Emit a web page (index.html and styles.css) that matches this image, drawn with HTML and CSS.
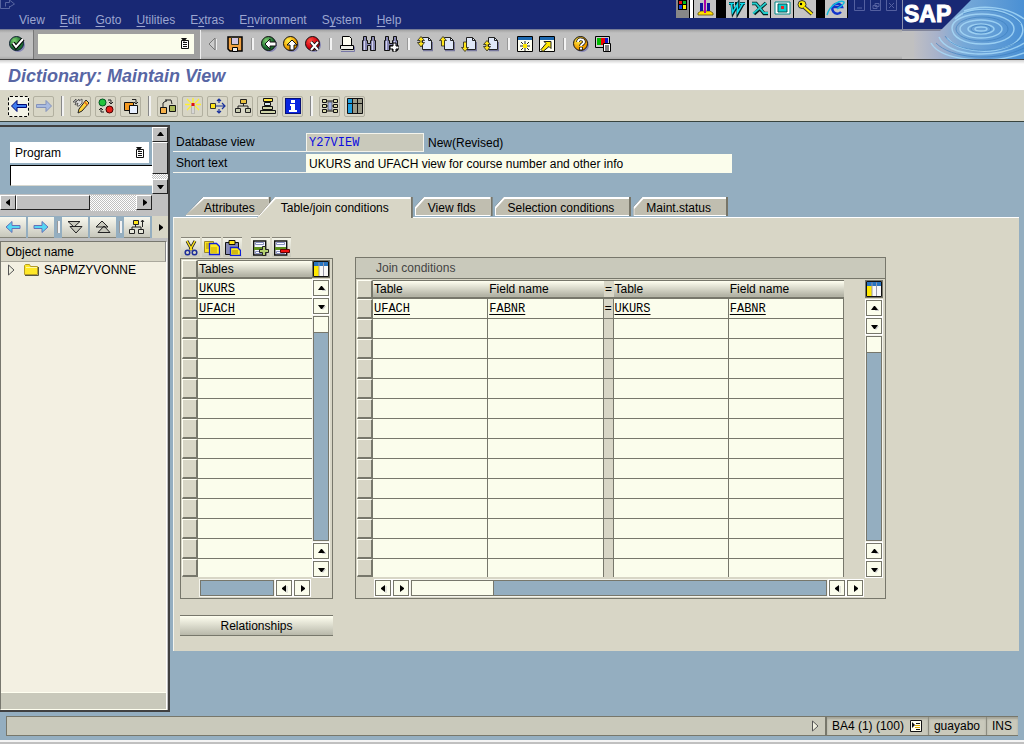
FILE: index.html
```
<!DOCTYPE html>
<html lang="en">
<head>
<meta charset="utf-8">
<title>Dictionary: Maintain View</title>
<link rel="stylesheet" href="styles.css">
</head>
<body>
<svg class="defs" aria-hidden="true">
  <defs>
    <linearGradient id="fade" x1="0" x2="1" y1="0" y2="0"><stop offset="0" stop-color="#bfbfc3"/><stop offset=".22" stop-color="#a6b1cb"/><stop offset=".45" stop-color="#77a9d8"/><stop offset="1" stop-color="#4a90d4"/></linearGradient>
    <radialGradient id="green" cx=".35" cy=".3"><stop offset="0" stop-color="#7fd070"/><stop offset="1" stop-color="#1c6c30"/></radialGradient>
    <radialGradient id="gold" cx=".35" cy=".3"><stop offset="0" stop-color="#fff04a"/><stop offset="1" stop-color="#f0a000"/></radialGradient>
    <radialGradient id="red" cx=".35" cy=".3"><stop offset="0" stop-color="#ff5040"/><stop offset="1" stop-color="#d00010"/></radialGradient>
  </defs>
  <symbol id="i-ok" viewBox="0 0 16 16"><circle cx="9" cy="9" r="7" fill="#8585b5"/><circle cx="7.500" cy="7.500" r="7" fill="url(#green)" stroke="#123"/><path d="M4 7l3 4 7-8" fill="none" stroke="#000" stroke-width="4"/><path d="M4 7l3 4 7-8" fill="none" stroke="#fff" stroke-width="2"/></symbol>
  <symbol id="i-back" viewBox="0 0 16 16"><circle cx="9" cy="9" r="7" fill="#8585b5"/><circle cx="7.500" cy="7.500" r="7" fill="url(#green)" stroke="#111"/><path d="M4 8l5-5v3h6v4H9v3z" fill="#fff" stroke="#111"/></symbol>
  <symbol id="i-exit" viewBox="0 0 16 16"><circle cx="9" cy="9" r="7" fill="#8585b5"/><circle cx="7.500" cy="7.500" r="7" fill="url(#gold)" stroke="#111"/><path d="M9 4l5 5h-3v5H7V9H4z" fill="#fff" stroke="#111"/></symbol>
  <symbol id="i-cancel" viewBox="0 0 16 16"><circle cx="9" cy="9" r="7" fill="#8585b5"/><circle cx="7.500" cy="7.500" r="7" fill="url(#red)" stroke="#111"/><path d="M6 6l7 8M13 6l-7 8" stroke="#111" stroke-width="3.500"/><path d="M6 6l7 8M13 6l-7 8" stroke="#fff" stroke-width="2"/></symbol>
  <symbol id="i-tri" viewBox="0 0 16 16"><path d="M10 2v12L4 8z" fill="#ccc" stroke="#777"/><path d="M11.500 3v11" stroke="#eee"/></symbol>
  <symbol id="i-save" viewBox="0 0 16 16"><path d="M1 1h14v14H3l-2-2z" fill="#f0a040" stroke="#000" stroke-width="1.500"/><path d="M4.500 1.500h7v7h-7z" fill="#d0c4e0" stroke="#332"/><path d="M5.500 11.500h5v4h-5z" fill="#eee" stroke="#000"/></symbol>
  <symbol id="i-print" viewBox="0 0 16 16"><path d="M2 15.500h13.500v-5" stroke="#7777a8" fill="none"/><path d="M3.500.5h7l2 2v7h-9z" fill="#fffef2" stroke="#000"/><path d="M1.500 9.500h13v4h-12l-1-1z" fill="#f0f0e8" stroke="#000"/></symbol>
  <symbol id="i-find" viewBox="0 0 16 16"><path d="M2.500.5h3v4h1v3h3v-3h1v-4h3v4h1v10h-5v-5h-3v5h-5v-10h1z" fill="#8888b4" stroke="#111"/><path d="M3.500 5v9M11.500 5v9" stroke="#d4d4ee"/></symbol>
  <symbol id="i-findnext" viewBox="0 0 16 16"><use href="#i-find"/><path d="M10 7h3v3h3v3h-3v3h-3v-3H7v-3h3z" fill="#fff" stroke="#000"/></symbol>
  <symbol id="i-page" viewBox="0 0 16 16"><path d="M6 14.500h9.500V6" fill="none" stroke="#77779c" stroke-width="1.500"/><path d="M5.500 1.500h6l3 3v9h-9z" fill="#e0e8f8" stroke="#222"/><path d="M11.500 1.500v3h3" fill="none" stroke="#222"/></symbol>
  <symbol id="i-first" viewBox="0 0 16 16"><use href="#i-page"/><path d="M4 .5l3.500 4H5v2h2.500L4 11 .5 6.500H3v-2H.5z" fill="#ffe51a" stroke="#222" stroke-width=".8"/></symbol>
  <symbol id="i-prev" viewBox="0 0 16 16"><use href="#i-page"/><path d="M4 .5l3.500 4h-2V10h-3V4.500h-2z" fill="#ffe51a" stroke="#222" stroke-width=".8"/></symbol>
  <symbol id="i-next" viewBox="0 0 16 16"><use href="#i-page"/><path d="M4 15.500l3.500-4h-2V6h-3v5.500h-2z" fill="#ffe51a" stroke="#222" stroke-width=".8"/></symbol>
  <symbol id="i-last" viewBox="0 0 16 16"><use href="#i-page"/><path d="M4 4.500l3.500 4H5v2h2.500L4 15 .5 10.500H3v-2H.5z" fill="#ffe51a" stroke="#222" stroke-width=".8"/></symbol>
  <symbol id="i-new" viewBox="0 0 16 16"><path d="M.5.500h15v15H.5z" fill="#fffff0" stroke="#000"/><path d="M1 1h14v3H1z" fill="#1c68b0"/><path d="M8 5v10M3 10h10M4 6l8 8M12 6l-8 8" stroke="#222"/><path d="M6 8h4v4H6z" fill="#ffe800"/></symbol>
  <symbol id="i-short" viewBox="0 0 16 16"><path d="M.5.500h15v15H.5z" fill="#fffff0" stroke="#000"/><path d="M1 1h14v3H1z" fill="#1c68b0"/><path d="M5 5.500h7v7l-2-2-6 5-2-2 5-6z" fill="#ffe800" stroke="#222"/></symbol>
  <symbol id="i-help" viewBox="0 0 16 16"><circle cx="9" cy="9" r="7" fill="#8585b5"/><circle cx="7.500" cy="7.500" r="7" fill="url(#gold)" stroke="#111"/><path d="M5 6c0-4 6-3 6 0 0 2-3 2-3 4M8 11v3" fill="none" stroke="#111" stroke-width="3.500"/><path d="M5 6c0-4 6-3 6 0 0 2-3 2-3 4M8 11.500v2" fill="none" stroke="#fff" stroke-width="2"/></symbol>
  <symbol id="i-layout" viewBox="0 0 16 16"><path d="M.5.500h14v11H.5z" fill="#ccc" stroke="#000"/><path d="M2 2h4v7H2z" fill="#0b0"/><path d="M6 2h4v7H6z" fill="#e00"/><path d="M10 2h3v7h-3z" fill="#11c"/><path d="M8.500 7.500h7v8h-7z" fill="#fff" stroke="#000"/><path d="M10 10h4M10 12h4M10 14h4" stroke="#000"/></symbol>
  <symbol id="i-doc" viewBox="0 0 10 12"><path d="M1.500 2.500h7v8h-7z" fill="#fff" stroke="#111"/><path d="M1 0h6L4 4z" fill="#111"/><path d="M3 4.500h4M3 6.500h4M3 8.500h4" stroke="#111" stroke-width="1"/></symbol>

  <symbol id="i-left" viewBox="0 0 16 16"><path d="M.5 8L6 2.500v4h9.500v3H6v4z" fill="#3d7cf0" stroke="#000872"/></symbol>
  <symbol id="i-rightdim" viewBox="0 0 16 16"><path d="M15.500 8L10 2.500v4H.5v3H10v4z" fill="#a9bbe0" stroke="#8392bb"/></symbol>
  <symbol id="i-edit" viewBox="0 0 16 16"><path d="M0 4l3-3v3l3-3v2l3-2v4L6 8H4l1-3-3 2 1-3z" fill="#ddd" stroke="#444" stroke-width=".8"/><path d="M13 2l3 3-7 8-4 2 1-4z" fill="#ffd238" stroke="#222"/><path d="M11.500 4l3 3" stroke="#e06820" stroke-width="1.500"/></symbol>
  <symbol id="i-swap" viewBox="0 0 16 16"><circle cx="4.500" cy="4.500" r="3.500" fill="#22c43c" stroke="#052"/><circle cx="11.500" cy="11.500" r="3.500" fill="#e82018" stroke="#400"/><path d="M10 2h3v4M11 4l2 2 2-2M6 14H3v-4M1 12l2-2 2 2" fill="none" stroke="#222"/></symbol>
  <symbol id="i-copyobj" viewBox="0 0 16 16"><path d="M1.500 4.500h9v8h-9z" fill="#f59a20" stroke="#111"/><path d="M6.500 7.500h8v8h-8z" fill="#e8f0ff" stroke="#111"/><path d="M9 1.500h4V6M11 4l2 2 2-2" fill="none" stroke="#222"/></symbol>
  <symbol id="i-hier" viewBox="0 0 16 16"><path d="M.5 9.500h6v6h-6z" fill="#f5b04a" stroke="#111"/><path d="M9.500 7.500h6v6h-6z" fill="#a8b858" stroke="#111"/><path d="M3 9V5l4-3h4l1 4M6 1v3" fill="none" stroke="#222"/></symbol>
  <symbol id="i-wand" viewBox="0 0 16 16"><path d="M8 0v5M2 1l4 4M14 1l-4 4M2 12l4-4M14 12l-4-4M0 6.500h5M16 6.500h-5" stroke="#fff02c" stroke-width="1.300"/><path d="M7 7h2v9H7z" fill="#fff" stroke="#777" stroke-width=".6"/><path d="M6.500 5h3v3h-3z" fill="#e01010"/></symbol>
  <symbol id="i-move" viewBox="0 0 16 16"><path d="M.5 5.500h5v5h-5z" fill="#ffe51a" stroke="#333"/><path d="M6 8h9M9 5V1M9 11v4M12 5l3 3-3 3M7 3l2-2 2 2M7 13l2 2 2-2" fill="none" stroke="#18309c" stroke-width="1.200"/></symbol>
  <symbol id="i-org" viewBox="0 0 16 16"><path d="M8.500 6v2M3 10V8h10v2" fill="none" stroke="#222"/><path d="M5.500 1.500h6v4h-6z" fill="#e8c040" stroke="#222"/><path d="M.5 10.500h5v4h-5zM10.500 10.500h5v4h-5z" fill="#c8ccb0" stroke="#222"/></symbol>
  <symbol id="i-stack" viewBox="0 0 16 16"><path d="M3.500.5h9v3h-9z" fill="#ffe640" stroke="#111"/><path d="M4.500 4.500h6v3h-6z" fill="#d8e8f0" stroke="#111"/><path d="M2.500 8.500h10v3h-10zM.5 12.500h15v3H.5z" fill="#d0d4a8" stroke="#111"/></symbol>
  <symbol id="i-info" viewBox="0 0 16 16"><path d="M0 0h16v16H0z" fill="#061078"/><path d="M1 1h14v14H1z" fill="#0824e0"/><path d="M6 2h4v3H6zM5 6h5v6h2v2H4v-2h2V8H5z" fill="#fff"/></symbol>
  <symbol id="i-list" viewBox="0 0 16 16"><path d="M4 3h8M4 8h8M4 13h8" stroke="#111"/><path d="M.5 1.500h4v3h-4zM.5 6.500h4v3h-4zM.5 11.500h4v3h-4zM11.500 1.500h4v3h-4zM11.500 6.500h4v3h-4zM11.500 11.500h4v3h-4z" fill="#d8d8a8" stroke="#111"/><path d="M6 4h4v8H6z" fill="#a8b8e8" stroke="#333" stroke-width=".6"/></symbol>
  <symbol id="i-grid" viewBox="0 0 16 16"><path d="M.5.500h15v15H.5z" fill="#9a9a88" stroke="#111"/><path d="M1 1h4v14H1z" fill="#20a0e0"/><path d="M5.500 1v14M10.500 1v14M1 5.500h14" stroke="#111"/></symbol>

  <symbol id="i-cyanl" viewBox="0 0 16 16"><path d="M1 8l6-5.500v4h8v3H7v4z" fill="#54d6f4" stroke="#6570b8"/></symbol>
  <symbol id="i-cyanr" viewBox="0 0 16 16"><path d="M15 8L9 2.500v4H1v3h8v4z" fill="#54d6f4" stroke="#6570b8"/></symbol>
  <symbol id="i-expand" viewBox="0 0 16 16"><path d="M1 2.500h12L7 8zM3 7.500h12L9 14z" fill="#c8c8bc" stroke="#222"/></symbol>
  <symbol id="i-collapse" viewBox="0 0 16 16"><path d="M7 2l6 6H1zM9 7l6 6.500H3z" fill="#c8c8bc" stroke="#222"/></symbol>
  <symbol id="i-tree" viewBox="0 0 16 16"><path d="M6.500 5v3M3 11V8h9v3M13.500 8V1M12 3l1.500-2L15 3" fill="none" stroke="#222"/><path d="M4.500 1.500h5v4h-5z" fill="#ffe51a" stroke="#222"/><path d="M.5 10.500h5v4h-5zM9.500 10.500h5v4h-5z" fill="#e8e8dc" stroke="#222"/></symbol>
  <symbol id="i-node" viewBox="0 0 8 12"><path d="M1.500 1v10L7 6z" fill="#f0f0e0" stroke="#555"/></symbol>
  <symbol id="i-folder" viewBox="0 0 15 12"><path d="M1 11.500h13.500V3" fill="none" stroke="#554"/><path d="M.5 10.500v-9l1-1h4l1 2h7v8z" fill="#ffe828" stroke="#b49c28"/><path d="M2 3.500h11" stroke="#fff9a8"/></symbol>
  <symbol id="i-cut" viewBox="0 0 16 16"><path d="M4 1l5 9M12 1L7 10" stroke="#222" stroke-width="3"/><path d="M4 1l5 9M12 1L7 10" stroke="#ffe51a" stroke-width="1.500"/><circle cx="4.500" cy="12.500" r="2.300" fill="none" stroke="#1c2c98" stroke-width="1.500"/><circle cx="11.500" cy="12.500" r="2.300" fill="none" stroke="#1c2c98" stroke-width="1.500"/></symbol>
  <symbol id="i-copy" viewBox="0 0 16 16"><path d="M.5 1.500h9v11h-9z" fill="#ffe51a" stroke="#998830"/><path d="M2 4h6M2 6h6M2 8h6" stroke="#a08820"/><path d="M5.500 3.500h7l3 3v8h-10z" fill="#ffee20" stroke="#1020d8" stroke-width="1.300"/><path d="M7 8h6M7 10h6M7 12h6" stroke="#c8a000"/></symbol>
  <symbol id="i-paste" viewBox="0 0 16 16"><path d="M.5 2.500h13v12H.5z" fill="#888cb4" stroke="#111"/><path d="M4 .5h6v4H4z" fill="#ffe51a" stroke="#111"/><path d="M5.500 7.500h7l3 3v5h-10z" fill="#ffee20" stroke="#1020d8" stroke-width="1.300"/><path d="M7 11h6M7 13h6" stroke="#a88400"/></symbol>
  <symbol id="i-rows" viewBox="0 0 16 16"><path d="M.7 1h12v14h-12z" fill="#f4f4ff" stroke="#111" stroke-width="1.400"/><path d="M2.500 2.500h8v2h-8zM2.500 11.500h8v2h-8z" fill="#fff" stroke="#8890c0"/><path d="M1 7h11v3H1z" fill="#5f9020"/></symbol>
  <symbol id="i-addrow" viewBox="0 0 16 16"><use href="#i-rows"/><path d="M9.500 6.500h3v3h3v3h-3v3h-3v-3h-3v-3h3z" fill="#b4d070" stroke="#222"/></symbol>
  <symbol id="i-delrow" viewBox="0 0 16 16"><use href="#i-rows"/><path d="M6.500 9.500h9v3h-9z" fill="#f01010" stroke="#600"/></symbol>
  <symbol id="i-cols" viewBox="0 0 16 16"><path d="M.5.500h15v15H.5z" fill="#f8f8f8" stroke="#111"/><path d="M1 1h14v4H1z" fill="#2874c0"/><path d="M1 5h5v10H1z" fill="#ffe800"/><path d="M6 1.500v13.500M10.500 1.500v13.500" stroke="#99a"/></symbol>
  <symbol id="i-up" viewBox="0 0 9 9"><path d="M5 7h5L6 3z" fill="#ccc"/><path d="M1 6h7L5 2H4z" fill="#000"/></symbol>
  <symbol id="i-down" viewBox="0 0 9 9"><path d="M2 4h7L6 8z" fill="#ccc"/><path d="M1 3h7L5 7H4z" fill="#000"/></symbol>
  <symbol id="i-prevarrow" viewBox="0 0 9 9"><path d="M6 1v7L2 5V4z" fill="#000"/><path d="M7 2v7" stroke="#ccc"/></symbol>
  <symbol id="i-nextarrow" viewBox="0 0 9 9"><path d="M3 1v7l4-3V4z" fill="#000"/></symbol>
  <symbol id="i-session" viewBox="0 0 12 12"><path d="M.5.500h11v11H.5z" fill="#fffff0" stroke="#111"/><path d="M2 2v6l3-3z" fill="#111"/><path d="M6 3.500h4M6 9.500h4" stroke="#111"/><path d="M5 5.500h5M5 7.500h5" stroke="#d8a800"/></symbol>
</svg>

<header class="top">
  <div class="menubar">
    <svg class="sysmark" width="16" height="10" viewBox="0 0 16 10"><path d="M.5 0v8.500h9V6M5.500 6.500v-4h4V0l5 4-5 3" fill="none" stroke="#5865a0"/></svg>
    <nav class="menus">
      <a href="#">View</a><a href="#"><u>E</u>dit</a><a href="#"><u>G</u>oto</a><a href="#"><u>U</u>tilities</a><a href="#">E<u>x</u>tras</a><a href="#">E<u>n</u>vironment</a><a href="#">S<u>y</u>stem</a><a href="#"><u>H</u>elp</a>
    </nav>
    <svg class="tray" width="172" height="18" viewBox="0 0 172 18">
      <path d="M0 0h172v18H0z" fill="#000"/><path d="M0 0h13v18H0z" fill="#888"/><path d="M14 0h3v18h-3z" fill="#fff"/>
      <path d="M18 0h22v18H18zM50 0h21v18H50zM73 0h21v18H73zM95 0h22v18H95zM118 0h22v18h-22zM149 0h22v18h-22z" fill="#c4c4c4"/>
      <path d="M2 0h9v10H2z"/><path d="M3 1h3v3H3z" fill="#e11"/><path d="M7 1h3v3H7z" fill="#0b2"/><path d="M3 5h3v4H3z" fill="#14d"/><path d="M7 5h3v4H7z" fill="#fe0"/>
      <path d="M22 13l3-2h9l3 2v2H22z" fill="#fd0" stroke="#650" stroke-width=".8"/><path d="M24 3h3v8h-3zM31 3h3v8h-3z" fill="#119"/><path d="M28 0h2v13h-2z" fill="#a0a"/>
      <path d="M53 3.500h5M59 3.500h4M64 3.500h5M56 4l1 9 5-9 0 9 5-9" fill="none" stroke="#022" stroke-width="3"/><path d="M53 3.500h5M64 3.500h5M55.500 4l1 8.500 5-8.500 0 8.500 5-8.500" fill="none" stroke="#1de" stroke-width="1.500"/>
      <path d="M76 3.500h4l8 10h4M90 3L78 14" fill="none" stroke="#022" stroke-width="3.500"/><path d="M76 3.500h4l8 9.500h4M90 3L77 13.500" fill="none" stroke="#2cc" stroke-width="1.800"/>
      <path d="M99 2h15v12H99z" fill="#fff" stroke="#088"/><path d="M102 4h9v8h-9z" fill="#1cc" stroke="#055"/><path d="M105 9V6h3v3z" fill="#e22"/>
      <circle cx="126" cy="4.500" r="4" fill="#fe0" stroke="#333"/><path d="M128 7l8 7" stroke="#333" stroke-width="4"/><path d="M128 7l8 7" stroke="#fe0" stroke-width="2"/><circle cx="125" cy="4" r="1.200"/>
      <path d="M165 12a5 5 0 1 1 1-5h-9" fill="none" stroke="#13c" stroke-width="2.500"/><path d="M151 15C154 4 165 0 168 2c1 2-4 5-7 7" fill="none" stroke="#1bd" stroke-width="1.500"/>
    </svg>
    <svg class="winctl" width="44" height="12" viewBox="0 0 44 12"><path d="M.5-.5h10v11H.5zM16.500-.5h10v11h-10zM32.500-.5h10v11h-10zM3 8h5M21 3.500h4v3h-4zM19 5.500h4v3h-4zM35 3l5 5M40 3l-5 5" fill="none" stroke="#5460a0"/></svg>
  </div>
  <div class="sysbar">
    <button class="ic ok" aria-label="Enter"><svg><use href="#i-ok"/></svg></button>
    <div class="cmdwell"><div class="cmd"><input type="text" aria-label="Command field"><svg><use href="#i-doc"/></svg></div></div>
    <div class="sysicons">
      <button class="ic" aria-label="Hide command field"><svg><use href="#i-tri"/></svg></button>
      <button class="ic" aria-label="Save"><svg><use href="#i-save"/></svg></button><i class="sep"></i>
      <button class="ic" aria-label="Back"><svg><use href="#i-back"/></svg></button>
      <button class="ic" aria-label="Exit"><svg><use href="#i-exit"/></svg></button>
      <button class="ic" aria-label="Cancel"><svg><use href="#i-cancel"/></svg></button><i class="sep"></i>
      <button class="ic" aria-label="Print"><svg><use href="#i-print"/></svg></button>
      <button class="ic" aria-label="Find"><svg><use href="#i-find"/></svg></button>
      <button class="ic" aria-label="Find next"><svg><use href="#i-findnext"/></svg></button><i class="sep"></i>
      <button class="ic" aria-label="First page"><svg><use href="#i-first"/></svg></button>
      <button class="ic" aria-label="Previous page"><svg><use href="#i-prev"/></svg></button>
      <button class="ic" aria-label="Next page"><svg><use href="#i-next"/></svg></button>
      <button class="ic" aria-label="Last page"><svg><use href="#i-last"/></svg></button><i class="sep"></i>
      <button class="ic" aria-label="New session"><svg><use href="#i-new"/></svg></button>
      <button class="ic" aria-label="Create shortcut"><svg><use href="#i-short"/></svg></button><i class="sep"></i>
      <button class="ic" aria-label="Help"><svg><use href="#i-help"/></svg></button>
      <button class="ic" aria-label="Customize layout"><svg><use href="#i-layout"/></svg></button>
    </div>
  </div>
  <svg class="logo" width="122" height="59" viewBox="0 0 122 59" role="img" aria-label="SAP">
    <path d="M0 0h122v30H0z" fill="#182874"/><path d="M0 31h122v28H0z" fill="#c0c0c0"/><path d="M0 0h1v30H0z" fill="#8b91ae"/><path d="M0 29h122v2H0z" fill="#82869a"/>
    <path d="M69 0h53v59H12V31h26z" fill="url(#fade)"/>
    <g fill="none" stroke="#a9dcfa" stroke-width="1.500" opacity=".8"><ellipse cx="79" cy="29" rx="6" ry="2"/><ellipse cx="79" cy="29" rx="13" ry="5"/><ellipse cx="79" cy="29" rx="21" ry="9"/><path d="M50 28c0-8 13-14 30-14s32 6 32 15-14 15-32 15-30-7-30-16M53 19c12-13 48-13 64 2 8 9 3 20-12 26-20 8-50 4-60-9M37 37c8 20 60 23 85 6M29 43c10 18 60 22 93 10M62 11c18-7 44-4 60 8"/></g>
    <g fill="none" stroke="#397dbe" opacity=".6"><ellipse cx="79" cy="29" rx="10" ry="4"/><ellipse cx="80" cy="29" rx="26" ry="12"/><path d="M43 36c10 17 56 20 77 3M34 43c14 15 58 20 88 5M61 14c18-7 46-4 58 10"/></g>
    <text x="2" y="22" class="logotext">SAP</text>
  </svg>
</header>

<h1 class="title">Dictionary: Maintain View</h1>

<div class="appbar">
  <button class="tb focus" aria-label="Back"><svg><use href="#i-left"/></svg></button>
  <button class="tb" aria-label="Forward"><svg><use href="#i-rightdim"/></svg></button><i class="sep"></i>
  <button class="tb" aria-label="Display or change"><svg><use href="#i-edit"/></svg></button>
  <button class="tb" aria-label="Active or inactive"><svg><use href="#i-swap"/></svg></button>
  <button class="tb" aria-label="Other object"><svg><use href="#i-copyobj"/></svg></button><i class="sep"></i>
  <button class="tb" aria-label="Check"><svg><use href="#i-hier"/></svg></button>
  <button class="tb" aria-label="Activate"><svg><use href="#i-wand"/></svg></button>
  <button class="tb" aria-label="Where-used list"><svg><use href="#i-move"/></svg></button>
  <button class="tb" aria-label="Object list"><svg><use href="#i-org"/></svg></button>
  <button class="tb" aria-label="Navigation stack"><svg><use href="#i-stack"/></svg></button>
  <button class="tb" aria-label="Information"><svg><use href="#i-info"/></svg></button><i class="sep"></i>
  <button class="tb" aria-label="Hierarchy"><svg><use href="#i-list"/></svg></button>
  <button class="tb" aria-label="Contents"><svg><use href="#i-grid"/></svg></button>
</div>

<main class="main">
  <aside class="nav">
    <div class="picker">
      <div class="pickform">
        <div class="pick"><select aria-label="Object type"><option>Program</option></select><svg><use href="#i-doc"/></svg></div>
        <input class="pickname" type="text" aria-label="Object name">
      </div>
      <div class="wv"><button class="wb" aria-label="Scroll up"><svg><use href="#i-up"/></svg></button><i class="wthumb"></i><i class="dither"></i><button class="wb" aria-label="Scroll down"><svg><use href="#i-down"/></svg></button></div>
      <div class="wh"><button class="wb" aria-label="Scroll left"><svg><use href="#i-prevarrow"/></svg></button><i class="wthumb"></i><i class="dither"></i><button class="wb" aria-label="Scroll right"><svg><use href="#i-nextarrow"/></svg></button></div>
    </div>
    <div class="navbar">
      <button class="nb" aria-label="Previous object"><svg><use href="#i-cyanl"/></svg></button>
      <button class="nb" aria-label="Next object"><svg><use href="#i-cyanr"/></svg></button><i class="sep"></i>
      <button class="nb" aria-label="Expand"><svg><use href="#i-expand"/></svg></button>
      <button class="nb" aria-label="Collapse"><svg><use href="#i-collapse"/></svg></button><i class="sep"></i>
      <button class="nb" aria-label="Up one level"><svg><use href="#i-tree"/></svg></button>
      <button class="more" aria-label="More"><svg><use href="#i-nextarrow"/></svg></button>
    </div>
    <div class="objects">
      <h2>Object name</h2>
      <ul><li><svg class="node"><use href="#i-node"/></svg><svg class="folder"><use href="#i-folder"/></svg><span>SAPMZYVONNE</span></li></ul>
      <div class="objfoot"></div>
    </div>
  </aside>

  <section class="work">
    <div class="field"><label for="dbview">Database view</label><input id="dbview" class="code" value="Y27VIEW" readonly><span>New(Revised)</span></div>
    <div class="field"><label for="short">Short text</label><input id="short" class="desc" value="UKURS and UFACH view for course number and other info"></div>

    <div class="tabs" role="tablist">
      <button class="tab slant" role="tab">Attributes</button>
      <button class="tab slant active" role="tab" aria-selected="true">Table/join conditions</button>
      <button class="tab" role="tab">View flds</button>
      <button class="tab" role="tab">Selection conditions</button>
      <button class="tab" role="tab">Maint.status</button>
    </div>

    <div class="panel">
      <div class="editbar">
        <button class="eb" aria-label="Cut"><svg><use href="#i-cut"/></svg></button>
        <button class="eb" aria-label="Copy"><svg><use href="#i-copy"/></svg></button>
        <button class="eb" aria-label="Paste"><svg><use href="#i-paste"/></svg></button>
        <button class="eb gap" aria-label="Insert row"><svg><use href="#i-addrow"/></svg></button>
        <button class="eb" aria-label="Delete row"><svg><use href="#i-delrow"/></svg></button>
      </div>
      <div class="boxes">
        <div class="box tablesbox">
          <div class="boxgrid">
            <table class="grid">
              <colgroup><col class="csel"><col class="cname"></colgroup>
              <thead><tr><th class="sel"></th><th>Tables</th></tr></thead>
              <tbody>
                <tr><td class="sel"></td><td><a href="#">UKURS</a></td></tr>
                <tr><td class="sel"></td><td><a href="#">UFACH</a></td></tr>
                <tr><td class="sel"></td><td></td></tr>
                <tr><td class="sel"></td><td></td></tr>
                <tr><td class="sel"></td><td></td></tr>
                <tr><td class="sel"></td><td></td></tr>
                <tr><td class="sel"></td><td></td></tr>
                <tr><td class="sel"></td><td></td></tr>
                <tr><td class="sel"></td><td></td></tr>
                <tr><td class="sel"></td><td></td></tr>
                <tr><td class="sel"></td><td></td></tr>
                <tr><td class="sel"></td><td></td></tr>
                <tr><td class="sel"></td><td></td></tr>
                <tr><td class="sel"></td><td></td></tr>
                <tr><td class="sel"></td><td></td></tr>
              </tbody>
            </table>
            <div class="vs">
              <button class="cfg" aria-label="Table settings"><svg><use href="#i-cols"/></svg></button>
              <button class="sb" aria-label="Scroll up"><svg><use href="#i-up"/></svg></button><button class="sb" aria-label="Scroll down"><svg><use href="#i-down"/></svg></button>
              <div class="track"><i></i></div>
              <button class="sb" aria-label="Scroll up"><svg><use href="#i-up"/></svg></button><button class="sb" aria-label="Scroll down"><svg><use href="#i-down"/></svg></button>
            </div>
            <div class="hs"><div class="track"></div><button class="sb" aria-label="Scroll left"><svg><use href="#i-prevarrow"/></svg></button><button class="sb" aria-label="Scroll right"><svg><use href="#i-nextarrow"/></svg></button></div>
          </div>
        </div>

        <div class="box joinbox">
          <h3>Join conditions</h3>
          <div class="boxgrid">
            <table class="grid">
              <colgroup><col class="csel"><col class="cj"><col class="cj"><col class="ceq"><col class="cj"><col class="cj"></colgroup>
              <thead><tr><th class="sel"></th><th>Table</th><th>Field name</th><th class="eq">=</th><th>Table</th><th>Field name</th></tr></thead>
              <tbody>
                <tr><td class="sel"></td><td><a href="#">UFACH</a></td><td><a href="#">FABNR</a></td><td class="eq">=</td><td><a href="#">UKURS</a></td><td><a href="#">FABNR</a></td></tr>
                <tr><td class="sel"></td><td></td><td></td><td class="eq"></td><td></td><td></td></tr>
                <tr><td class="sel"></td><td></td><td></td><td class="eq"></td><td></td><td></td></tr>
                <tr><td class="sel"></td><td></td><td></td><td class="eq"></td><td></td><td></td></tr>
                <tr><td class="sel"></td><td></td><td></td><td class="eq"></td><td></td><td></td></tr>
                <tr><td class="sel"></td><td></td><td></td><td class="eq"></td><td></td><td></td></tr>
                <tr><td class="sel"></td><td></td><td></td><td class="eq"></td><td></td><td></td></tr>
                <tr><td class="sel"></td><td></td><td></td><td class="eq"></td><td></td><td></td></tr>
                <tr><td class="sel"></td><td></td><td></td><td class="eq"></td><td></td><td></td></tr>
                <tr><td class="sel"></td><td></td><td></td><td class="eq"></td><td></td><td></td></tr>
                <tr><td class="sel"></td><td></td><td></td><td class="eq"></td><td></td><td></td></tr>
                <tr><td class="sel"></td><td></td><td></td><td class="eq"></td><td></td><td></td></tr>
                <tr><td class="sel"></td><td></td><td></td><td class="eq"></td><td></td><td></td></tr>
                <tr><td class="sel"></td><td></td><td></td><td class="eq"></td><td></td><td></td></tr>
              </tbody>
            </table>
            <div class="vs">
              <button class="cfg" aria-label="Table settings"><svg><use href="#i-cols"/></svg></button>
              <button class="sb" aria-label="Scroll up"><svg><use href="#i-up"/></svg></button><button class="sb" aria-label="Scroll down"><svg><use href="#i-down"/></svg></button>
              <div class="track"><i></i></div>
              <button class="sb" aria-label="Scroll up"><svg><use href="#i-up"/></svg></button><button class="sb" aria-label="Scroll down"><svg><use href="#i-down"/></svg></button>
            </div>
            <div class="hs"><button class="sb" aria-label="Scroll left"><svg><use href="#i-prevarrow"/></svg></button><button class="sb" aria-label="Scroll right"><svg><use href="#i-nextarrow"/></svg></button><div class="track"><i></i></div><button class="sb" aria-label="Scroll left"><svg><use href="#i-prevarrow"/></svg></button><button class="sb" aria-label="Scroll right"><svg><use href="#i-nextarrow"/></svg></button></div>
          </div>
        </div>
      </div>
      <button class="rel">Relationships</button>
    </div>
  </section>
</main>

<footer class="status">
  <div class="msg"><svg><use href="#i-node"/></svg></div>
  <div class="cell">BA4 (1) (100) <svg><use href="#i-session"/></svg></div>
  <div class="cell">guayabo</div>
  <div class="cell">INS</div>
</footer>
<div class="edge"></div>
</body>
</html>
```
FILE: styles.css
```
* { box-sizing: border-box; }
body {
  margin: 0; min-height: 100vh; display: flex; flex-direction: column;
  background: #94aec0; color: #000;
  font: 12px/16px "Liberation Sans", Arial, sans-serif;
}
button, input, select { font: inherit; color: inherit; margin: 0; padding: 0; border: 0; border-radius: 0; background: none; }
button { display: flex; align-items: center; justify-content: center; flex: none; }
svg { display: block; flex: none; }
h1, h2, h3, ul { margin: 0; padding: 0; font-weight: normal; font-size: 12px; list-style: none; }
.defs { width: 0; height: 0; position: absolute; }

/* header */
.top { display: grid; grid-template-columns: 1fr 122px; grid-template-rows: 30px 29px; border-bottom: 1px solid #404040; background: #c0c0c0; }
.menubar { display: flex; align-items: flex-start; background: #182874; border-bottom: 1px solid #777d97; }
.sysmark { margin-right: 3px; }
.menus { display: flex; flex: 1; gap: 15px; padding-top: 12px; color: #9ca6d0; }
.menus a { color: inherit; text-decoration: none; }
.menus u { text-underline-offset: 2px; }
.winctl { margin: 0 4px 0 6px; }
.sysbar { display: flex; background: linear-gradient(#a4a4a4, #c0c0c0 3px, #c0c0c0 26px, #a8a8a8); }
.logo { grid-column: 2; grid-row: 1 / 3; }
.logotext { font: bold 23px "Liberation Sans", Arial, sans-serif; fill: #fff; stroke: #fff; stroke-width: 1px; }
.ic, .ic svg { width: 16px; height: 16px; }
.ok { margin: 6px 8px 0 9px; }
.cmdwell { background: #a0a0a0; border-left: 1px solid #777; border-right: 1px solid #eee; padding: 4px 6px 4px 4px; width: 168px; }
.cmd { display: flex; align-items: center; background: #fbfdec; height: 20px; }
.cmd input { flex: 1; min-width: 0; height: 20px; }
.cmd svg { width: 10px; height: 12px; margin-right: 4px; }
.sysicons { display: flex; gap: 6px; padding: 6px 0 0 4px; }
.sep { flex: none; width: 6px; display: flex; justify-content: center; }
.sep::before { content: ""; width: 2px; height: 12px; margin: auto; background: #f2f2f2; border-left: 1px solid #999; }
.sysicons .sep { height: 16px; }

.title { height: 31px; padding: 4px 8px; background: linear-gradient(#cfcfcf, #fff 4px); border-bottom: 1px solid #d8d6ca; font: italic bold 18px/24px "Liberation Sans", Arial, sans-serif; color: #5866a4; }

.appbar { display: flex; align-items: center; gap: 4px; height: 31px; padding: 0 8px; background: #d8d6c6; border-bottom: 1px solid #38443e; }
.appbar .sep { width: 8px; height: 21px; }
.appbar .sep::before { height: 20px; border-color: #888; }
.tb { width: 21px; height: 21px; border: 1px solid #b2b0a0; border-radius: 2px; }
.tb svg { width: 16px; height: 16px; }
.tb.focus { border: 1px dashed #000; background: #f4f4e8; }

/* navigation area */
.main { display: flex; flex: 1; padding: 3px 5px 0 0; }
.nav { flex: none; width: 170px; display: flex; flex-direction: column; border: solid #404040; border-width: 2px 2px 2px 0; background: #c0c0c0; }
.picker { display: grid; grid-template-columns: 1fr 16px; grid-template-rows: 67px 17px; background: #94aec0; }
.pickform { padding: 15px 0 0 10px; }
.pick { display: flex; align-items: center; background: #fff; height: 21px; width: 139px; padding-right: 4px; }
.pick select { appearance: none; flex: 1; height: 21px; padding-left: 5px; }
.pick svg { width: 10px; height: 12px; }
.pickname { display: block; width: 100%; height: 21px; margin-top: 2px; background: #fff; border: solid #000; border-width: 1px 0 0 1px; border-bottom: 1px solid #d8d8d0; }
.wb, .wthumb { background: #c0c0c0; border: 1px solid; border-color: #fff #222 #222 #fff; }
.wb { width: 16px; height: 15px; }
.wb svg, .sb svg, .more svg { width: 9px; height: 9px; }
.wv { display: flex; flex-direction: column; }
.wv .wthumb { height: 32px; }
.wh { display: flex; background: #c0c0c0; padding-top: 1px; }
.wh .wthumb { width: 74px; height: 15px; }
.wh { grid-column: 1; }
.picker::after { content: ""; background: #c0c0c0; }
.dither { flex: 1; background: repeating-conic-gradient(#c0c0c0 0 25%, #fff 0 50%) 0 0 / 2px 2px; height: 100%; }
.wv .dither { height: auto; }
.navbar { display: flex; align-items: center; gap: 2px; margin-top: 5px; height: 22px; background: #94aec0; }
.navbar .sep { width: 4px; }
.nb { width: 26px; height: 21px; background: linear-gradient(#f8f8ee, #c8c8bc); border-bottom: 1px solid #85857a; }
.nb svg { width: 16px; height: 16px; }
.more { flex: 1; height: 22px; background: #d8d6c6; }
.objects { display: flex; flex-direction: column; flex: 1; margin: 3px 1px 0 0; background: #f3f0e2; border: 1px solid #77776e; border-right-color: #fff; border-bottom-color: #fffff0; }
.objects h2 { height: 20px; padding: 2px 5px; background: #d8d6c6; border-bottom: 1px solid #aaa89c; border-right: 1px solid #888; }
.objects ul { flex: 1; }
.objects li { display: flex; align-items: center; height: 16px; padding-left: 6px; }
.node { width: 8px; height: 12px; margin-right: 9px; }
.folder { width: 15px; height: 12px; margin-right: 5px; }
.objfoot { height: 17px; background: #c9c9bb; border-top: 1px solid #fffff0; }

/* work area */
.work { flex: 1; min-width: 0; padding: 8px 0 61px 3px; }
.field { display: flex; align-items: flex-end; height: 19px; margin-bottom: 2px; }
.field label { width: 133px; padding-left: 3px; line-height: 18px; border-bottom: 1px solid #f4f4ec; }
.field input { height: 19px; padding: 0 3px; }
.field span { padding-left: 4px; line-height: 18px; }
.code { width: 118px; background: #c9c9bb; border: 1px solid #f4f4ec; color: #0c0ce0; font-family: "Liberation Mono", monospace; }
.field .code { padding: 0 2px; }
.desc { width: 426px; background: #fbfdec; }

.tabs { display: flex; gap: 2px; padding-left: 12px; margin-top: 24px; height: 20px; }
.tab { position: relative; z-index: 0; height: 19px; padding: 2px 17px 0 13px; background: #777568; clip-path: polygon(0 10px, 9px 0, 100% 0, 100% 100%, 0 100%); }
.tab::before { content: ""; position: absolute; z-index: -1; inset: 0 2px 0 0; background: #fff; clip-path: inherit; }
.tab::after { content: ""; position: absolute; z-index: -1; inset: 2px 2px 1px 1px; background: #c0beb0; clip-path: inherit; }
.slant { padding: 2px 16px 0 19px; clip-path: polygon(0 100%, 18px 0, 100% 0, 100% 100%); }
.active { z-index: 2; height: 21px; margin: 0 0 -1px -16px; padding: 0 24px 0 24px; }
.active::after { inset: 2px 2px 0 1px; background: #d8d6c6; }

.panel { background: #d8d6c6; border-top: 1px solid #fff; border-left: 1px solid #f4f4ec; padding: 19px 8px 15px 6px; }
.editbar { display: flex; gap: 2px; height: 20px; padding-left: 1px; }
.eb { width: 19px; height: 20px; border-top: 1px solid #88867a; background: linear-gradient(#f4f4e8, #c8c8ba); }
.eb svg { width: 16px; height: 16px; }
.gap { margin-left: 7px; }
.boxes { display: flex; align-items: flex-end; gap: 22px; }
.box { border: 1px solid #77776b; }
.tablesbox { width: 153px; }
.joinbox { width: 531px; }
.joinbox h3 { height: 21px; padding: 2px 20px; background: #c9c9bb; border-bottom: 1px solid #77776b; color: #444; }
.boxgrid { display: grid; grid-template-columns: 1fr 18px; padding: 1px 2px 2px 1px; }
.grid { table-layout: fixed; border-spacing: 0; border-collapse: separate; }
.tablesbox .grid { width: 130px; }
.joinbox .grid { width: 487px; }
.csel { width: 16px; }
.ceq { width: 10px; }
.grid th, .grid td { height: 20px; padding: 0 1px; font-weight: normal; text-align: left; vertical-align: middle; white-space: nowrap; line-height: 16px; }
.grid th { height: 19px; background: linear-gradient(#fffff0, #b4b4a6 90%); border-top: 1px solid #77776b; border-bottom: 2px solid #77776b; }
.grid td { background: #fbfdec; border-bottom: 1px solid #77776b; font-family: "Liberation Mono", monospace; }
.joinbox td { border-right: 1px solid #77776b; }
.grid tr:last-child td:not(.sel) { border-bottom: 0; }
.grid tbody tr:last-child td { height: 18px; }
.grid td a { color: #000; text-underline-offset: 2px; }
.grid .sel { background: #d8d6c6; border: solid; border-width: 1px 2px 2px 1px; border-color: #fffff4 #77776b #77776b #fffff4; }
.grid .eq { background: #d8d6c6; text-align: center; padding: 0; }
.vs { display: flex; flex-direction: column; align-items: center; gap: 2px; }
.cfg { width: 18px; height: 18px; border: 1px solid #77776b; }
.cfg svg { width: 16px; height: 16px; }
.sb { width: 16px; height: 16px; background: #fbfdec; border: 1px solid #77776b; box-shadow: 0 0 0 1px #fff; }
.track { display: flex; flex-direction: column; flex: 1; background: #94aec0; border: 1px solid #77776b; box-shadow: 0 0 0 1px #f4f4ec; }
.vs .track { width: 16px; }
.vs .track i { height: 16px; background: #fbfdec; border-bottom: 1px solid #77776b; }
.hs { display: flex; gap: 2px; height: 16px; margin: 3px 2px 0 18px; grid-column: 1; }
.tablesbox .hs { margin-right: 2px; }
.hs .track i { width: 82px; flex: 1; background: #fbfdec; border-right: 1px solid #77776b; }
.rel { width: 153px; height: 21px; margin-top: 16px; background: linear-gradient(#fffff0, #b8b8aa); border: solid #77776b; border-width: 1px 0; }

/* status bar */
.status { display: flex; height: 20px; margin: 4px 6px; background: #c9c9bb; border: 1px solid #77776b; border-right: 0; }
.msg { flex: 1; display: flex; align-items: center; justify-content: flex-end; padding-right: 6px; }
.msg svg { width: 8px; height: 12px; }
.cell { display: flex; align-items: center; gap: 6px; padding: 0 6px 0 5px; border-left: 1px solid #8c8c80; box-shadow: inset 0 2px 2px #a4a498; white-space: nowrap; }
.cell:nth-child(2) { border-left: 2px solid #77776b; }
.cell svg { width: 12px; height: 12px; }
.edge { height: 4px; background: #c0c0c0; border-top: 2px solid #f4f4f4; }
```
